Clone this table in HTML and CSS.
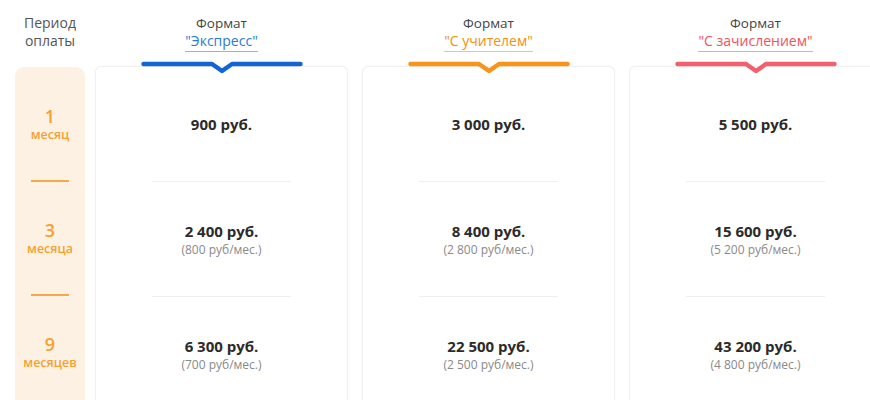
FILE: index.html
```html
<!DOCTYPE html>
<html lang="ru">
<head>
<meta charset="utf-8">
<link rel="stylesheet" href="styles.css">
</head>
<body>
<div class="table">
  <div class="period">
    <div class="period-head">Период<br>оплаты</div>
    <div class="period-box">
      <div class="p-row"><span class="num">1</span><span class="unit">месяц</span></div>
      <div class="p-row sep"><span class="num">3</span><span class="unit">месяца</span></div>
      <div class="p-row sep"><span class="num">9</span><span class="unit">месяцев</span></div>
    </div>
  </div>

  <div class="col blue">
    <div class="head">
      <div class="fmt">Формат</div>
      <div class="link">"Экспресс"</div>
      <svg class="bar" viewBox="0 0 162 14" width="162" height="14"><path d="M2.5 4 L71 4 L81 11 L91 4 L159.5 4" fill="none" stroke="currentColor" stroke-width="4.5" stroke-linecap="round" stroke-linejoin="round"/></svg>
    </div>
    <div class="card">
      <div class="row"><b>900 руб.</b></div>
      <div class="row sep"><b>2 400 руб.</b><span class="sub">(800 руб/мес.)</span></div>
      <div class="row sep"><b>6 300 руб.</b><span class="sub">(700 руб/мес.)</span></div>
    </div>
  </div>

  <div class="col orange">
    <div class="head">
      <div class="fmt">Формат</div>
      <div class="link">"С учителем"</div>
      <svg class="bar" viewBox="0 0 162 14" width="162" height="14"><path d="M2.5 4 L71 4 L81 11 L91 4 L159.5 4" fill="none" stroke="currentColor" stroke-width="4.5" stroke-linecap="round" stroke-linejoin="round"/></svg>
    </div>
    <div class="card">
      <div class="row"><b>3 000 руб.</b></div>
      <div class="row sep"><b>8 400 руб.</b><span class="sub">(2 800 руб/мес.)</span></div>
      <div class="row sep"><b>22 500 руб.</b><span class="sub">(2 500 руб/мес.)</span></div>
    </div>
  </div>

  <div class="col red">
    <div class="head">
      <div class="fmt">Формат</div>
      <div class="link">"С зачислением"</div>
      <svg class="bar" viewBox="0 0 162 14" width="162" height="14"><path d="M2.5 4 L71 4 L81 11 L91 4 L159.5 4" fill="none" stroke="currentColor" stroke-width="4.5" stroke-linecap="round" stroke-linejoin="round"/></svg>
    </div>
    <div class="card">
      <div class="row"><b>5 500 руб.</b></div>
      <div class="row sep"><b>15 600 руб.</b><span class="sub">(5 200 руб/мес.)</span></div>
      <div class="row sep"><b>43 200 руб.</b><span class="sub">(4 800 руб/мес.)</span></div>
    </div>
  </div>
</div>
</body>
</html>
```

FILE: styles.css
```css
* { box-sizing: border-box; }
html, body { margin: 0; padding: 0; background: #fff; overflow: hidden; }
body {
  font-family: "Open Sans", "Noto Sans", sans-serif;
  color: #2b2b2b;
  width: 870px;
  height: 400px;
}
.table {
  display: flex;
  gap: 14px;
  align-items: flex-start;
}
.period {
  width: 81px;
  flex: none;
  padding-left: 15px;
}
.period-head {
  height: 67px;
  width: 70px;
  text-align: center;
  font-size: 14px;
  line-height: 18px;
  color: #555;
  padding-top: 14px;
}
.period-box {
  width: 70px;
  background: #fdf1e3;
  border-radius: 9px 9px 0 0;
  height: 340px;
}
.p-row {
  height: 114px;
  display: flex;
  flex-direction: column;
  align-items: center;
  justify-content: center;
  color: #f6a12f;
  position: relative;
}
.p-row.sep::before {
  content: "";
  position: absolute;
  top: -1px;
  left: 16px;
  width: 38px;
  height: 2px;
  background: #f6a84a;
}
.num { font-size: 18px; line-height: 22px; font-weight: 600; }
.unit { font-size: 12.5px; line-height: 16px; font-weight: 600; }

.col {
  width: 253px;
  flex: none;
}
.head {
  height: 66px;
  display: flex;
  flex-direction: column;
  align-items: center;
  padding-top: 14px;
  position: relative;
  z-index: 2;
}
.fmt {
  font-size: 13.5px;
  line-height: 18px;
  color: #444;
  flex: none;
}
.link {
  font-size: 14px;
  line-height: 17px;
  border-bottom: 1px solid currentColor;
  padding-bottom: 2px;
  flex: none;
}
.bar {
  display: block;
  flex: none;
  margin-top: 8px;
  overflow: visible;
}
.blue .link { color: #2a7ad8; border-color: #8fb6ea; }
.blue .bar { color: #1266d4; }
.orange .link { color: #f2910a; border-color: #f6c27e; }
.orange .bar { color: #f8931c; }
.red .link { color: #f0525e; border-color: #f5a3a9; }
.red .bar { color: #f2606b; }

.card {
  background: #fff;
  border: 1px solid #f0f0f0;
  border-bottom: none;
  border-radius: 6px 6px 0 0;
  height: 340px;
  box-shadow: 0 0 3px rgba(0,0,0,0.03);
}
.row {
  height: 115px;
  display: flex;
  flex-direction: column;
  align-items: center;
  justify-content: center;
  position: relative;
}
.row.sep::before {
  content: "";
  position: absolute;
  top: -1px;
  left: 56px;
  right: 56px;
  height: 1px;
  background: #efefef;
}
.row b {
  font-size: 15px;
  line-height: 19px;
  font-weight: 700;
  color: #2b2b2b;
}
.sub {
  font-size: 12px;
  line-height: 17px;
  color: #8a8a8a;
}
```
